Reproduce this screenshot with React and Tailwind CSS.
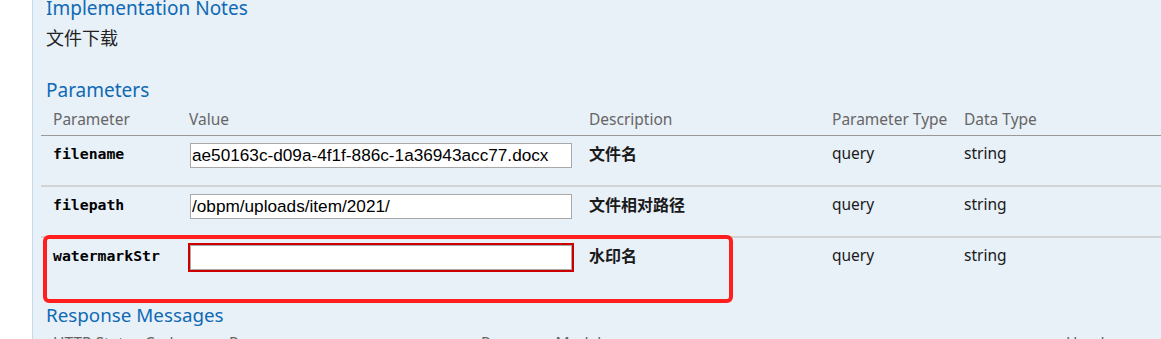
const rows = [
  { name: 'filename', value: 'ae50163c-d09a-4f1f-886c-1a36943acc77.docx', desc: '文件名' },
  { name: 'filepath', value: '/obpm/uploads/item/2021/', desc: '文件相对路径' },
  { name: 'watermarkStr', value: '', desc: '水印名', error: true },
];

function ParamRow({ row, last }) {
  return (
    <div
      className={
        'flex ' +
        (last ? 'h-[64px]' : 'h-[51px] border-b-2 border-[#d3d3d3]')
      }
    >
      <div className="w-[142px] shrink-0 pl-[12px] pt-[8px] leading-[20px] text-[14.8px] font-bold text-black font-['DejaVu_Sans_Mono',monospace]">
        {row.name}
      </div>
      <div className="w-[400px] shrink-0 pl-[7px] pt-[7px]">
        <input
          readOnly
          defaultValue={row.value}
          className={
            "block w-[382px] h-[25px] bg-white border border-[#a9a9a9] pl-[1px] text-[17.2px] text-black font-['Liberation_Sans',Arial,sans-serif] " +
            (row.error ? 'outline-2 outline-[#cc0000]' : 'outline-none')
          }
        />
      </div>
      <div className="w-[243px] shrink-0 pl-[6px] pt-[8px] leading-[20px] text-[16px] font-bold text-[#1a1a1a]">
        {row.desc}
      </div>
      <div className="w-[132px] shrink-0 pl-[6px] pt-[7px] leading-[20px] text-[15.5px] text-[#1a1a1a]">
        query
      </div>
      <div className="flex-1 pl-[6px] pt-[7px] leading-[20px] text-[15.5px] text-[#1a1a1a]">
        string
      </div>
    </div>
  );
}

export default function App() {
  return (
    <div className="relative w-[1161px] h-[339px] overflow-hidden bg-white flex font-['Noto_Sans','Noto_Sans_CJK_SC',sans-serif]">
      <div className="w-[32px] shrink-0 bg-white" />
      <div className="flex-1 border-l border-[#c3d9ec] bg-[#e8f0f8] pl-[8px]">
        <div className="mt-[-4px] ml-[5px] text-[19px] leading-[24px] text-[#0f6ab4]">
          Implementation Notes
        </div>
        <p className="mt-[6px] ml-[5px] text-[18px] leading-[24px] text-[#222]">文件下载</p>
        <div className="mt-[28px] ml-[5px] text-[19px] leading-[24px] text-[#0f6ab4]">
          Parameters
        </div>

        <div className="flex border-b border-[#999] text-[15.5px] leading-[20px] text-[#666] pt-[7px] pb-[6px]">
          <div className="w-[142px] shrink-0 pl-[12px]">Parameter</div>
          <div className="w-[400px] shrink-0 pl-[6px]">Value</div>
          <div className="w-[243px] shrink-0 pl-[6px]">Description</div>
          <div className="w-[132px] shrink-0 pl-[6px]">Parameter Type</div>
          <div className="flex-1 pl-[6px]">Data Type</div>
        </div>

        {rows.map((r, i) => (
          <ParamRow key={r.name} row={r} last={i === rows.length - 1} />
        ))}

        <div className="mt-[1px] ml-[5px] text-[18.8px] leading-[24px] text-[#0f6ab4]">
          Response Messages
        </div>
        <div className="flex pt-[6px] text-[15.5px] leading-[20px] text-[#666]">
          <div className="w-[188px] shrink-0 pl-[12px]">HTTP Status Code</div>
          <div className="w-[252px] shrink-0">Reason</div>
          <div className="w-[585px] shrink-0">Response Model</div>
          <div className="flex-1">Headers</div>
        </div>
      </div>

      <div className="absolute left-[43px] top-[235px] w-[690px] h-[68px] border-[4px] border-[#ff1f1f] rounded-[6px]" />
    </div>
  );
}
